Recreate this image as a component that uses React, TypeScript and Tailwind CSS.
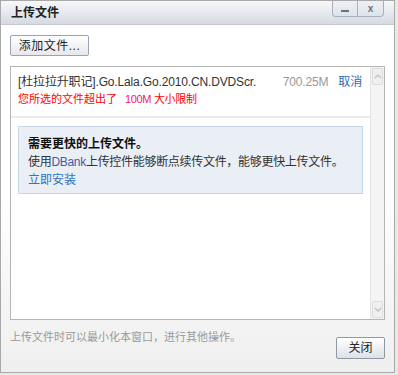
export default function App() {
    return (
        <div
            className="w-[398px] h-[375px] bg-[#e9e9e9] text-[12px] text-[#333]"
            style={{ fontFamily: '"Liberation Sans", "Noto Sans CJK SC", sans-serif' }}
        >
            <div className="w-[395px] h-[373px] border border-[#a9a9a9] flex flex-col bg-gradient-to-b from-white via-white to-[#efefef]">
                {/* TITLE BAR */}
                <div className="h-[24px] shrink-0 flex items-start justify-between bg-gradient-to-b from-[#f7f8fa] to-[#d5dae2] border-b border-[#c4c9d1]">
                    <div className="pl-[10px] pt-[5px] font-bold text-[12px] leading-[14px] text-[#222]">上传文件</div>
                    <div className="mr-[10px] flex h-[16px] border border-t-0 border-[#a9b0bb] rounded-b-[4px] bg-gradient-to-b from-[#eef0f4] to-[#dfe3ea]">
                        <div className="w-[25px] flex items-center justify-center border-r border-[#a9b0bb]">
                            <div className="w-[8px] h-[2px] bg-[#6a7180] mt-[4px]" />
                        </div>
                        <div className="w-[25px] flex items-center justify-center text-[10px] font-bold text-[#6a7180] leading-none">x</div>
                    </div>
                </div>

                {/* ADD FILE */}
                <div className="pl-[9px] pt-[10px]">
                    <button className="w-[79px] h-[21px] border border-[#9aa3ae] rounded-[2px] bg-gradient-to-b from-white to-[#e6e8ec] text-[12px] leading-none text-[#222] tracking-[0.5px]">
                        添加文件...
                    </button>
                </div>

                {/* FILE LIST */}
                <div className="mx-[9px] mt-[10px] h-[254px] border border-[#b5b5b5] bg-white flex">
                    <div className="flex-1 flex flex-col">
                        <div className="pl-[7px] pr-[8px] pt-[7px] pb-[8px] border-b-2 border-[#ebebeb]">
                            <div className="flex items-center h-[16px] tracking-[-0.15px]">
                                <span className="flex-1">[杜拉拉升职记].Go.Lala.Go.2010.CN.DVDScr.</span>
                                <span className="text-[#999] mr-[10px]">700.25M</span>
                                <span className="text-[#2d6ab4]">取消</span>
                            </div>
                            <div className="h-[18px] flex items-center text-[#f00] text-[11px]">
                                <span>您所选的文件超出了</span>
                                <span className="text-[#f0206a] ml-[8px] mr-[3px] tracking-[-0.4px]">100M</span>
                                <span className="tracking-[-0.3px]">大小限制</span>
                            </div>
                        </div>
                        <div className="mx-[7px] mt-[8px] w-[345px] h-[68px] border border-[#c6d7ea] bg-[#eaeef5] px-[9px] pt-[8px] leading-[18px]">
                            <div className="font-bold text-[#111]">需要更快的上传文件。</div>
                            <div className="tracking-[-0.3px]">
                                使用<span className="text-[#4a5aa8]">DBank</span>上传控件能够断点续传文件，能够更快上传文件。
                            </div>
                            <div className="text-[#2d73c8]">立即安装</div>
                        </div>
                    </div>
                    {/* SCROLLBAR */}
                    <div className="w-[17px] bg-[#f4f4f4] border-l border-[#e4e4e4] flex flex-col justify-between">
                        <div className="h-[17px] m-[1px] border border-[#dcdcdc] rounded-[2px] bg-[#f0f0ee] flex items-center justify-center">
                            <svg width="8" height="5" viewBox="0 0 8 5"><path d="M1 4 L4 1 L7 4" fill="none" stroke="#c4c4c4" strokeWidth="1.5" /></svg>
                        </div>
                        <div className="h-[17px] m-[1px] border border-[#dcdcdc] rounded-[2px] bg-[#f0f0ee] flex items-center justify-center">
                            <svg width="8" height="5" viewBox="0 0 8 5"><path d="M1 1 L4 4 L7 1" fill="none" stroke="#c4c4c4" strokeWidth="1.5" /></svg>
                        </div>
                    </div>
                </div>

                {/* FOOTER */}
                <div className="flex items-start justify-between pl-[9px] pr-[9px] pt-[9px]">
                    <span className="text-[#999] text-[11px] leading-[16px]">上传文件时可以最小化本窗口，进行其他操作。</span>
                    <button className="mt-[8px] w-[49px] h-[22px] border border-[#8e98a6] rounded-[2px] bg-gradient-to-b from-white to-[#dde1e7] text-[12px] leading-none text-[#222]">
                        关闭
                    </button>
                </div>
            </div>
        </div>
    )
}
